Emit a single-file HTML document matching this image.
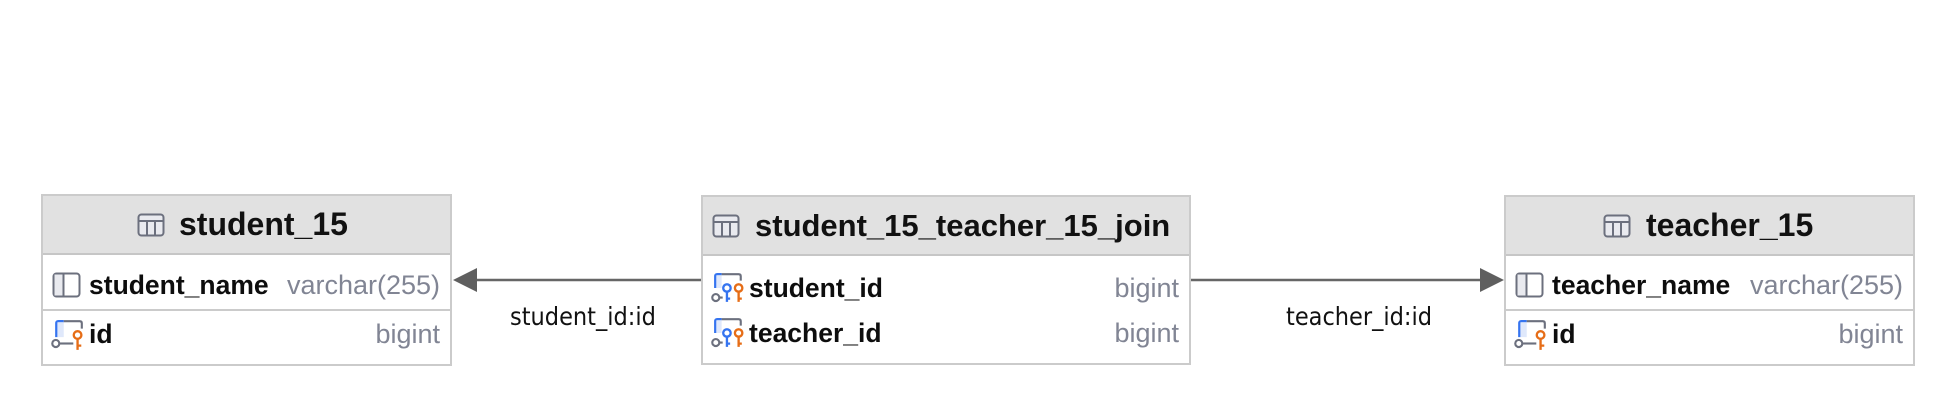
<!DOCTYPE html>
<html><head><meta charset="utf-8"><style>
html,body{margin:0;padding:0;background:#fff;}
body{width:1956px;height:408px;position:relative;overflow:hidden;font-family:"Liberation Sans",sans-serif;}
.box{position:absolute;border:2px solid #cbcbcb;background:#fff;box-sizing:border-box;}
.hdr{position:absolute;left:0;right:0;top:0;height:57px;background:#e1e1e1;border-bottom:2px solid #c6c6c6;}
.title{position:absolute;top:0;height:57px;line-height:57px;font-weight:bold;font-size:32px;color:#111;white-space:nowrap;}
.row{position:absolute;left:0;right:0;height:46px;}
.nm{position:absolute;left:46px;top:0;line-height:46px;font-weight:bold;font-size:26.5px;color:#0d0d0d;white-space:nowrap;}
.ty{position:absolute;right:10px;top:0;line-height:46px;font-size:27px;color:#818594;white-space:nowrap;}
.sep{position:absolute;left:0;right:0;height:2px;background:#cbcbcb;}
svg.ic{position:absolute;}
.lbl{position:absolute;font-size:25px;color:#111;font-family:"DejaVu Sans Condensed","DejaVu Sans","Liberation Sans",sans-serif;white-space:nowrap;}
</style></head><body>

<svg width="1956" height="408" style="position:absolute;left:0;top:0">
<line x1="476" y1="280" x2="701" y2="280" stroke="#666" stroke-width="2.5"/>
<polygon points="453,280 477,268 477,292" fill="#5f5f5f"/>
<line x1="1191" y1="280" x2="1481" y2="280" stroke="#666" stroke-width="2.5"/>
<polygon points="1504,280 1480,268 1480,292" fill="#5f5f5f"/>
</svg>
<div class="lbl" style="left:510px;top:302px;">student_id:id</div>
<div class="lbl" style="left:1286px;top:302px;">teacher_id:id</div>

<div class="box" style="left:41px;top:194px;width:411px;height:172px;">
  <div class="hdr">
    <svg class="ic" style="left:94px;top:17px" width="28" height="24" viewBox="0 0 28 24"><rect x="1.5" y="1.5" width="25" height="21" rx="3" fill="#e9eaef" stroke="#6c707e" stroke-width="2"/><line x1="1.5" y1="8" x2="26.5" y2="8" stroke="#6c707e" stroke-width="2"/><line x1="10" y1="8" x2="10" y2="22" stroke="#6c707e" stroke-width="2"/><line x1="18" y1="8" x2="18" y2="22" stroke="#6c707e" stroke-width="2"/></svg>
    <div class="title" style="left:136px;">student_15</div>
  </div>
  <div class="row" style="top:66px;">
    <svg class="ic" style="left:9px;top:10px" width="30" height="27" viewBox="0 0 30 27"><rect x="1.5" y="1.5" width="26" height="23" rx="3" fill="#fff" stroke="#6c707e" stroke-width="2"/><rect x="2.5" y="2.5" width="9" height="21" fill="#e9eaef"/><line x1="11.5" y1="1.5" x2="11.5" y2="24.5" stroke="#6c707e" stroke-width="2"/></svg>
    <div class="nm">student_name</div><div class="ty">varchar(255)</div>
  </div>
  <div class="sep" style="top:113px;"></div>
  <div class="row" style="top:115px;">
    <svg class="ic" style="left:8px;top:8px" width="34" height="32" viewBox="0 0 32 30"><path d="M5 17 V4 Q5 2 7 2 H12" fill="none" stroke="#3574f0" stroke-width="2.2"/><rect x="6" y="3" width="6" height="14" fill="#dfe8fb"/><path d="M12 2 H27 Q29 2 29 4 V9" fill="none" stroke="#6c707e" stroke-width="2"/><circle cx="4.5" cy="23" r="3.3" fill="none" stroke="#6c707e" stroke-width="2"/><line x1="8" y1="23" x2="21" y2="23" stroke="#6c707e" stroke-width="2"/><circle cx="25" cy="15" r="3.6" fill="none" stroke="#e66d17" stroke-width="2.2"/><path d="M25 18.5 V29 M25 25 H28.5" fill="none" stroke="#e66d17" stroke-width="2.2"/></svg>
    <div class="nm">id</div><div class="ty">bigint</div>
  </div>
</div>

<div class="box" style="left:701px;top:195px;width:490px;height:170px;">
  <div class="hdr">
    <svg class="ic" style="left:9px;top:17px" width="28" height="24" viewBox="0 0 28 24"><rect x="1.5" y="1.5" width="25" height="21" rx="3" fill="#e9eaef" stroke="#6c707e" stroke-width="2"/><line x1="1.5" y1="8" x2="26.5" y2="8" stroke="#6c707e" stroke-width="2"/><line x1="10" y1="8" x2="10" y2="22" stroke="#6c707e" stroke-width="2"/><line x1="18" y1="8" x2="18" y2="22" stroke="#6c707e" stroke-width="2"/></svg>
    <div class="title" style="left:52px;font-size:31px;">student_15_teacher_15_join</div>
  </div>
  <div class="row" style="top:68px;">
    <svg class="ic" style="left:8px;top:7px" width="34" height="32" viewBox="0 0 32 30"><path d="M4 15 V4 Q4 2 6 2 H10" fill="none" stroke="#3574f0" stroke-width="2.2"/><rect x="5" y="3" width="5" height="12" fill="#dfe8fb"/><path d="M10 2 H26 Q28 2 28 4 V8" fill="none" stroke="#6c707e" stroke-width="2"/><circle cx="4.5" cy="24" r="3.3" fill="none" stroke="#6c707e" stroke-width="2"/><line x1="8" y1="24" x2="11" y2="24" stroke="#6c707e" stroke-width="2"/><circle cx="15" cy="15" r="3.5" fill="none" stroke="#3574f0" stroke-width="2.2"/><path d="M15 18.5 V28 M15 25 H18" fill="none" stroke="#3574f0" stroke-width="2.2"/><circle cx="26" cy="15" r="3.5" fill="none" stroke="#e66d17" stroke-width="2.2"/><path d="M26 18.5 V28 M26 25 H29" fill="none" stroke="#e66d17" stroke-width="2.2"/></svg>
    <div class="nm">student_id</div><div class="ty">bigint</div>
  </div>
  <div class="row" style="top:113px;">
    <svg class="ic" style="left:8px;top:7px" width="34" height="32" viewBox="0 0 32 30"><path d="M4 15 V4 Q4 2 6 2 H10" fill="none" stroke="#3574f0" stroke-width="2.2"/><rect x="5" y="3" width="5" height="12" fill="#dfe8fb"/><path d="M10 2 H26 Q28 2 28 4 V8" fill="none" stroke="#6c707e" stroke-width="2"/><circle cx="4.5" cy="24" r="3.3" fill="none" stroke="#6c707e" stroke-width="2"/><line x1="8" y1="24" x2="11" y2="24" stroke="#6c707e" stroke-width="2"/><circle cx="15" cy="15" r="3.5" fill="none" stroke="#3574f0" stroke-width="2.2"/><path d="M15 18.5 V28 M15 25 H18" fill="none" stroke="#3574f0" stroke-width="2.2"/><circle cx="26" cy="15" r="3.5" fill="none" stroke="#e66d17" stroke-width="2.2"/><path d="M26 18.5 V28 M26 25 H29" fill="none" stroke="#e66d17" stroke-width="2.2"/></svg>
    <div class="nm">teacher_id</div><div class="ty">bigint</div>
  </div>
</div>

<div class="box" style="left:1504px;top:195px;width:411px;height:171px;">
  <div class="hdr">
    <svg class="ic" style="left:97px;top:17px" width="28" height="24" viewBox="0 0 28 24"><rect x="1.5" y="1.5" width="25" height="21" rx="3" fill="#e9eaef" stroke="#6c707e" stroke-width="2"/><line x1="1.5" y1="8" x2="26.5" y2="8" stroke="#6c707e" stroke-width="2"/><line x1="10" y1="8" x2="10" y2="22" stroke="#6c707e" stroke-width="2"/><line x1="18" y1="8" x2="18" y2="22" stroke="#6c707e" stroke-width="2"/></svg>
    <div class="title" style="left:140px;">teacher_15</div>
  </div>
  <div class="row" style="top:65px;">
    <svg class="ic" style="left:9px;top:10px" width="30" height="27" viewBox="0 0 30 27"><rect x="1.5" y="1.5" width="26" height="23" rx="3" fill="#fff" stroke="#6c707e" stroke-width="2"/><rect x="2.5" y="2.5" width="9" height="21" fill="#e9eaef"/><line x1="11.5" y1="1.5" x2="11.5" y2="24.5" stroke="#6c707e" stroke-width="2"/></svg>
    <div class="nm">teacher_name</div><div class="ty">varchar(255)</div>
  </div>
  <div class="sep" style="top:112px;"></div>
  <div class="row" style="top:114px;">
    <svg class="ic" style="left:8px;top:8px" width="34" height="32" viewBox="0 0 32 30"><path d="M5 17 V4 Q5 2 7 2 H12" fill="none" stroke="#3574f0" stroke-width="2.2"/><rect x="6" y="3" width="6" height="14" fill="#dfe8fb"/><path d="M12 2 H27 Q29 2 29 4 V9" fill="none" stroke="#6c707e" stroke-width="2"/><circle cx="4.5" cy="23" r="3.3" fill="none" stroke="#6c707e" stroke-width="2"/><line x1="8" y1="23" x2="21" y2="23" stroke="#6c707e" stroke-width="2"/><circle cx="25" cy="15" r="3.6" fill="none" stroke="#e66d17" stroke-width="2.2"/><path d="M25 18.5 V29 M25 25 H28.5" fill="none" stroke="#e66d17" stroke-width="2.2"/></svg>
    <div class="nm">id</div><div class="ty">bigint</div>
  </div>
</div>
</body></html>
